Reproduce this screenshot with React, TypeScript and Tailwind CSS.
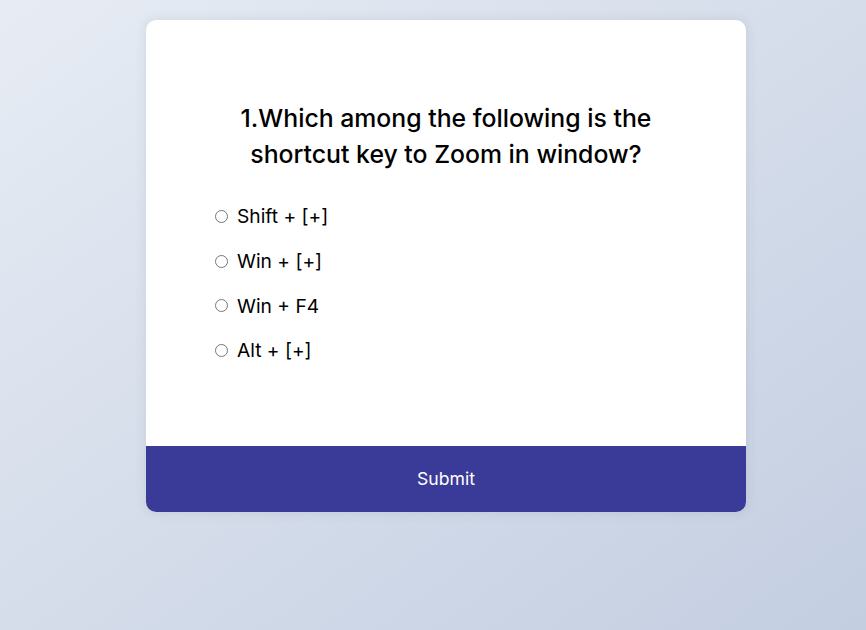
const options = [
  { id: 'a', label: 'Shift + [+]' },
  { id: 'b', label: 'Win + [+]' },
  { id: 'c', label: 'Win + F4' },
  { id: 'd', label: 'Alt + [+]' },
];

export default function App() {
  return (
    <div
      className="min-h-screen w-full bg-[linear-gradient(to_bottom_right,#e7ecf4,#c3cee1)] pt-5 pl-[26px]"
      style={{ fontFamily: 'Inter, "Open Sans", sans-serif' }}
    >
      <div className="mx-auto w-[600px] overflow-hidden rounded-[10px] bg-white shadow-[0_0_10px_2px_rgba(100,100,100,0.1)]">
        <div className="px-16 pt-16 pb-[65px]">
          <h2 className="px-4 py-4 text-center text-[24.8px] leading-[36px] font-medium text-black">
            1.Which among the following is the shortcut key to Zoom in window?
          </h2>
          <ul className="-mt-[2px]">
            {options.map((o) => (
              <li key={o.id} className="my-4 flex items-center text-[19.2px] leading-[28.8px] text-black">
                <input type="radio" name="answer" id={o.id} className="ml-[5px] mr-[3px] h-[13px] w-[13px]" />
                <label htmlFor={o.id} className="ml-[6px]">
                  {o.label}
                </label>
              </li>
            ))}
          </ul>
        </div>
        <button className="block w-full bg-[#3a3b98] p-[20.8px] text-[17.6px] leading-[24.4px] text-white">
          Submit
        </button>
      </div>
    </div>
  );
}
